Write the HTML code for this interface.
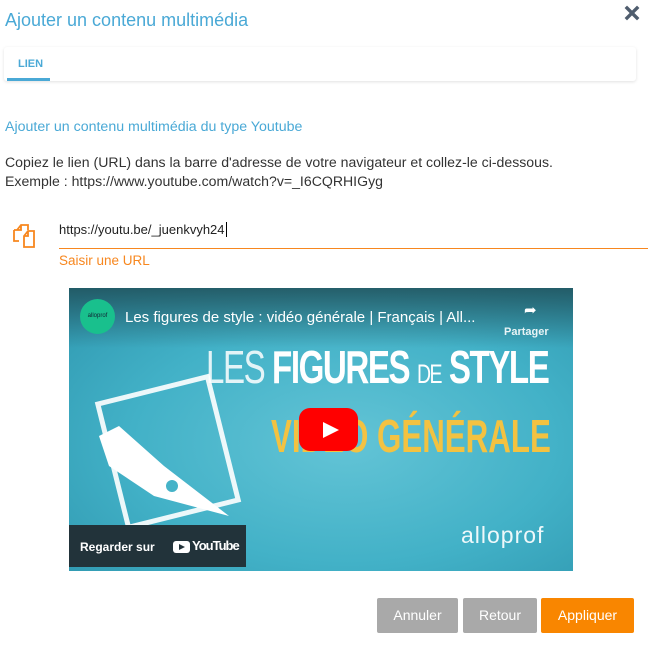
<!DOCTYPE html>
<html><head><meta charset="utf-8"><style>
*{margin:0;padding:0;box-sizing:border-box}
body{width:648px;height:647px;background:#fff;font-family:"Liberation Sans",sans-serif;position:relative;overflow:hidden}
.a{position:absolute;white-space:nowrap}
.btn{position:absolute;top:598px;height:35px;color:#fff;font-size:14px;text-align:center;line-height:35px;border-radius:2px}
</style></head><body>
<div class="a" style="left:5px;top:10px;font-size:18px;color:#4aa9d6">Ajouter un contenu multimédia</div>
<svg class="a" style="left:624px;top:5px" width="16" height="16" viewBox="0 0 16 16"><path d="M3 3L13 13M13 3L3 13" stroke="#4f5d6e" stroke-width="3.4" stroke-linecap="square"/></svg>
<div class="a" style="left:4px;top:47px;width:632px;height:34px;background:#fff;border-radius:3px;box-shadow:0 1px 3px rgba(0,0,0,.12)"></div>
<div class="a" style="left:18px;top:58px;font-size:11px;font-weight:bold;color:#4aa9d6">LIEN</div>
<div class="a" style="left:7px;top:78px;width:43px;height:3px;background:#4aa9d6"></div>
<div class="a" style="left:5px;top:119px;font-size:14.2px;color:#4aa9d6">Ajouter un contenu multimédia du type Youtube</div>
<div class="a" style="left:5px;top:153px;font-size:14.1px;color:#333;line-height:19px">Copiez le lien (URL) dans la barre d'adresse de votre navigateur et collez-le ci-dessous.<br>Exemple : https://www.youtube.com/watch?v=_I6CQRHIGyg</div>
<svg class="a" style="left:12px;top:222px" width="24" height="28" viewBox="0 0 24 28"><path d="M5 8l4-5h7v5M2 8h7V3M2 8v11h5" fill="none" stroke="#f7871f" stroke-width="1.8"/><path d="M12 14l4-5h6v16H12zM12 14h4V9" fill="none" stroke="#f7871f" stroke-width="1.8"/></svg>
<div class="a" style="left:59px;top:222px;font-size:13px;color:#222">https://youtu.be/_juenkvyh24<span style="border-left:1px solid #000;margin-left:1px"></span></div>
<div class="a" style="left:59px;top:248px;width:589px;height:1px;background:#f7871f"></div>
<div class="a" style="left:59px;top:253px;font-size:13.5px;color:#f7871f">Saisir une URL</div>
<div class="a" style="left:69px;top:288px;width:504px;height:283px;background:radial-gradient(ellipse at 55% 55%,#63c4d6 0%,#42b1c7 55%,#2e96ae 100%);overflow:hidden">
 <div class="a" style="left:0;top:0;width:504px;height:60px;background:linear-gradient(#1f4c55cc,transparent)"></div>
 <div class="a" style="left:11px;top:11px;width:35px;height:35px;border-radius:50%;background:#19c08d;font-size:6px;color:#123;line-height:35px;text-align:center">alloprof</div>
 <div class="a" style="left:56px;top:21px;font-size:15px;color:#fff">Les figures de style : vidéo générale | Français | All...</div>
 <div class="a" style="left:455px;top:13px;font-size:15px;color:#fff">➦</div>
 <div class="a" style="left:435px;top:38px;font-size:11px;font-weight:bold;color:#e8f4f6">Partager</div>
 <div class="a" style="left:137px;top:52px;font-size:46px;color:#fff;font-weight:bold;letter-spacing:-2px;transform:scaleX(.72);transform-origin:0 0"><span style="font-weight:normal;opacity:.85">LES </span>FIGURES <span style="font-weight:normal;font-size:27px">DE</span> STYLE</div>
 <div class="a" style="left:202px;top:121px;font-size:46px;color:#f3c241;font-weight:bold;transform:scaleX(.68);transform-origin:0 0">VIDÉO GÉNÉRALE</div>
 <div class="a" style="left:230px;top:120px;width:59px;height:43px;background:#f00;border-radius:11px"></div>
 <svg class="a" style="left:252px;top:132px" width="20" height="20"><path d="M2 2L18 10L2 18z" fill="#fff"/></svg>
 <div class="a" style="left:40px;top:98px;width:118px;height:132px;border:5px solid #fff;opacity:.9;transform:rotate(-14deg)"></div>
 <svg class="a" style="left:25px;top:138px" width="140" height="110"><path d="M5 10L25 0L70 40L135 90L60 70L15 40z" fill="#fff"/><circle cx="78" cy="60" r="6" fill="#45b3c8"/></svg>
 <div class="a" style="left:0;top:237px;width:177px;height:42px;background:#22333a"></div>
 <div class="a" style="left:11px;top:252px;font-size:12px;font-weight:bold;color:#fff">Regarder sur</div>
 <div class="a" style="left:104px;top:253px;width:17px;height:12px;background:#fff;border-radius:3px"></div>
 <svg class="a" style="left:110px;top:256px" width="6" height="6"><path d="M0 0L6 3L0 6z" fill="#22333a"/></svg>
 <div class="a" style="left:123px;top:250px;font-size:13px;font-weight:bold;color:#fff;letter-spacing:-1px">YouTube</div>
 <div class="a" style="left:392px;top:234px;font-size:23px;color:#eef8fa;letter-spacing:1px">alloprof</div>
</div>
<div class="btn" style="left:377px;width:81px;background:#a9a9a9">Annuler</div>
<div class="btn" style="left:463px;width:74px;background:#a9a9a9">Retour</div>
<div class="btn" style="left:541px;width:93px;background:#f98600">Appliquer</div>
</body></html>
